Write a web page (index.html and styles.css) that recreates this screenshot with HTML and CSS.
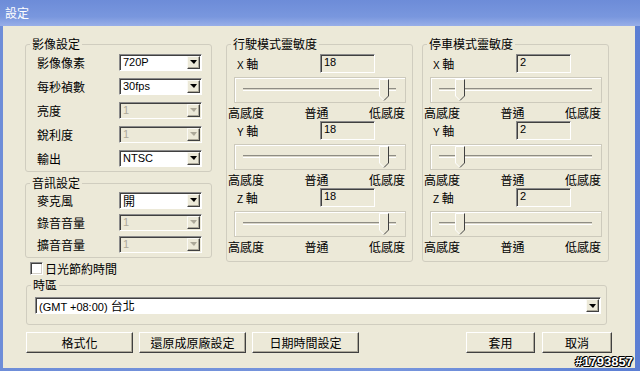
FILE: index.html
```html
<!DOCTYPE html>
<html lang="zh-Hant">
<head>
  <meta charset="UTF-8">
  <title>設定</title>
  <link rel="stylesheet" href="styles.css">
</head>
<body>

  <div class="window">
    <div class="titlebar">設定</div>

    <div class="client">
      <div class="top">

        <!-- 左欄 -->
        <div class="col-left">
          <fieldset class="group g-video">
            <legend>影像設定</legend>
            <div class="row"><span class="lbl">影像像素</span><div class="combo"><span class="val">720P</span><span class="drop"></span></div></div>
            <div class="row"><span class="lbl">每秒禎數</span><div class="combo"><span class="val">30fps</span><span class="drop"></span></div></div>
            <div class="row"><span class="lbl">亮度</span><div class="combo disabled"><span class="val">1</span><span class="drop"></span></div></div>
            <div class="row"><span class="lbl">銳利度</span><div class="combo disabled"><span class="val">1</span><span class="drop"></span></div></div>
            <div class="row"><span class="lbl">輸出</span><div class="combo"><span class="val">NTSC</span><span class="drop"></span></div></div>
          </fieldset>

          <fieldset class="group g-audio">
            <legend>音訊設定</legend>
            <div class="row"><span class="lbl">麥克風</span><div class="combo"><span class="val cjk">開</span><span class="drop"></span></div></div>
            <div class="row"><span class="lbl">錄音音量</span><div class="combo disabled"><span class="val">1</span><span class="drop"></span></div></div>
            <div class="row"><span class="lbl">擴音音量</span><div class="combo disabled"><span class="val">1</span><span class="drop"></span></div></div>
          </fieldset>

          <label class="check"><span class="box"></span>日光節約時間</label>
        </div>

        <!-- 行駛模式 -->
        <fieldset class="group sens">
          <legend>行駛模式靈敏度</legend>
          <div class="block">
            <div class="axis-row"><span class="lbl"><span class="latin">X</span> 軸</span><div class="num">18</div></div>
            <div class="slider"><div class="track"></div><svg class="thumb" style="left:144px" width="10" height="22" viewBox="0 0 10 22"><polygon points="0.5,0.5 9.5,0.5 9.5,17 5,21.5 0.5,17" fill="#ece9d8"/><polyline points="5,21.5 0.5,17 0.5,0.5 9.5,0.5" fill="none" stroke="#fff"/><polyline points="9.5,0.5 9.5,17 5,21.5" fill="none" stroke="#404040"/></svg></div>
            <div class="scale"><span>高感度</span><span>普通</span><span>低感度</span></div>
          </div>
          <div class="block">
            <div class="axis-row"><span class="lbl"><span class="latin">Y</span> 軸</span><div class="num">18</div></div>
            <div class="slider"><div class="track"></div><svg class="thumb" style="left:144px" width="10" height="22" viewBox="0 0 10 22"><polygon points="0.5,0.5 9.5,0.5 9.5,17 5,21.5 0.5,17" fill="#ece9d8"/><polyline points="5,21.5 0.5,17 0.5,0.5 9.5,0.5" fill="none" stroke="#fff"/><polyline points="9.5,0.5 9.5,17 5,21.5" fill="none" stroke="#404040"/></svg></div>
            <div class="scale"><span>高感度</span><span>普通</span><span>低感度</span></div>
          </div>
          <div class="block">
            <div class="axis-row"><span class="lbl"><span class="latin">Z</span> 軸</span><div class="num">18</div></div>
            <div class="slider"><div class="track"></div><svg class="thumb" style="left:144px" width="10" height="22" viewBox="0 0 10 22"><polygon points="0.5,0.5 9.5,0.5 9.5,17 5,21.5 0.5,17" fill="#ece9d8"/><polyline points="5,21.5 0.5,17 0.5,0.5 9.5,0.5" fill="none" stroke="#fff"/><polyline points="9.5,0.5 9.5,17 5,21.5" fill="none" stroke="#404040"/></svg></div>
            <div class="scale"><span>高感度</span><span>普通</span><span>低感度</span></div>
          </div>
        </fieldset>

        <!-- 停車模式 -->
        <fieldset class="group sens park">
          <legend>停車模式靈敏度</legend>
          <div class="block">
            <div class="axis-row"><span class="lbl"><span class="latin">X</span> 軸</span><div class="num">2</div></div>
            <div class="slider"><div class="track"></div><svg class="thumb" style="left:24px" width="10" height="22" viewBox="0 0 10 22"><polygon points="0.5,0.5 9.5,0.5 9.5,17 5,21.5 0.5,17" fill="#ece9d8"/><polyline points="5,21.5 0.5,17 0.5,0.5 9.5,0.5" fill="none" stroke="#fff"/><polyline points="9.5,0.5 9.5,17 5,21.5" fill="none" stroke="#404040"/></svg></div>
            <div class="scale"><span>高感度</span><span>普通</span><span>低感度</span></div>
          </div>
          <div class="block">
            <div class="axis-row"><span class="lbl"><span class="latin">Y</span> 軸</span><div class="num">2</div></div>
            <div class="slider"><div class="track"></div><svg class="thumb" style="left:24px" width="10" height="22" viewBox="0 0 10 22"><polygon points="0.5,0.5 9.5,0.5 9.5,17 5,21.5 0.5,17" fill="#ece9d8"/><polyline points="5,21.5 0.5,17 0.5,0.5 9.5,0.5" fill="none" stroke="#fff"/><polyline points="9.5,0.5 9.5,17 5,21.5" fill="none" stroke="#404040"/></svg></div>
            <div class="scale"><span>高感度</span><span>普通</span><span>低感度</span></div>
          </div>
          <div class="block">
            <div class="axis-row"><span class="lbl"><span class="latin">Z</span> 軸</span><div class="num">2</div></div>
            <div class="slider"><div class="track"></div><svg class="thumb" style="left:24px" width="10" height="22" viewBox="0 0 10 22"><polygon points="0.5,0.5 9.5,0.5 9.5,17 5,21.5 0.5,17" fill="#ece9d8"/><polyline points="5,21.5 0.5,17 0.5,0.5 9.5,0.5" fill="none" stroke="#fff"/><polyline points="9.5,0.5 9.5,17 5,21.5" fill="none" stroke="#404040"/></svg></div>
            <div class="scale"><span>高感度</span><span>普通</span><span>低感度</span></div>
          </div>
        </fieldset>
      </div>

      <!-- 時區 -->
      <fieldset class="group g-tz">
        <legend>時區</legend>
        <div class="combo tz"><span class="val">(GMT +08:00) <span class="cjk">台北</span></span><span class="drop"></span></div>
      </fieldset>

      <div class="buttons">
        <button class="btn wide">格式化</button>
        <button class="btn wide">還原成原廠設定</button>
        <button class="btn wide">日期時間設定</button>
        <span class="spacer"></span>
        <button class="btn apply">套用</button>
        <button class="btn cancel">取消</button>
      </div>
    </div>

    <div class="watermark">#1793857</div>
  </div>

</body>
</html>
```

FILE: styles.css
```css
* {
  box-sizing: border-box;
}

body {
  margin: 0;
  font-family: "Noto Sans CJK TC", sans-serif;
  font-size: 12px;
  color: #000;
}

.window {
  position: relative;
  width: 640px;
  height: 371px;
  display: flex;
  flex-direction: column;
  background: linear-gradient(90deg, #6e8dd8, #7896dd 60%, #5b7ed3);
  overflow: hidden;
}

.titlebar {
  height: 26px;
  padding: 6px 0 0 5px;
  color: #fff;
  font-size: 12px;
  line-height: 14px;
  background: linear-gradient(#6d8cd8, #7997de 65%, #98aee8);
}

.client {
  flex: 1;
  margin: 0 5px 3px 3px;
  padding: 12px 23px 0 22px;
  background-color: #ece9d8;
}

.top {
  display: flex;
  align-items: flex-start;
}

/* group boxes */
fieldset.group {
  margin: 0;
  padding: 0;
  min-width: 0;
  border: 1px solid #d0cdbf;
  border-radius: 3px;
}

legend {
  margin-left: 4px;
  padding: 0 2px;
  line-height: 12px;
}

.col-left {
  width: 187px;
  margin-right: 14px;
}

.row {
  display: flex;
  align-items: center;
  height: 24px;
  padding-left: 11px;
}

.row .lbl {
  width: 82px;
}

.g-video {
  padding-bottom: 1px !important;
}

.g-audio {
  margin-top: 5px !important;
  padding-bottom: 2px !important;
}

.g-audio .row {
  height: 22px;
}

/* combo boxes */
.combo {
  display: flex;
  width: 83px;
  height: 17px;
  padding: 1px 1px 1px 2px;
  background-color: #fff;
  border: 1px solid;
  border-color: #8a8a8a #fff #fff #8a8a8a;
  box-shadow: inset 1px 1px #404040;
  font-family: "Liberation Sans", sans-serif;
  font-size: 11px;
  line-height: 13px;
}

.combo .val {
  flex: 1;
  padding-left: 1px;
  white-space: nowrap;
}

.cjk {
  font-family: "Noto Sans CJK TC", sans-serif;
  font-size: 12px;
}

.drop {
  width: 13px;
  height: 13px;
  display: flex;
  align-items: center;
  justify-content: center;
  background-color: #ece9d8;
  border: 1px solid;
  border-color: #fbfaf5 #404040 #404040 #fbfaf5;
  box-shadow: inset -1px -1px #aca899;
}

.drop::after {
  content: "";
  border-left: 4px solid transparent;
  border-right: 3px solid transparent;
  border-top: 4px solid #000;
}

.combo.disabled {
  background-color: #ece9d8;
  color: #aca899;
}

.combo.disabled .drop::after {
  border-top-color: #aca899;
}

/* checkbox */
.check {
  display: flex;
  align-items: center;
  height: 13px;
  margin-top: 4px;
  padding-left: 5px;
  line-height: 13px;
}

.check .box {
  width: 13px;
  height: 13px;
  margin-right: 2px;
  background-color: #fff;
  border: 1px solid;
  border-color: #8a8a8a #fff #fff #8a8a8a;
  box-shadow: inset 1px 1px #404040, inset -1px -1px #d4d0c8;
}

/* sensitivity groups */
.sens {
  width: 187px;
  margin-right: 9px !important;
  padding: 4px 0 7px !important;
}

.park {
  margin-right: 0 !important;
}

.block + .block {
  margin-top: 1px;
}

.axis-row {
  display: flex;
  align-items: center;
  height: 19px;
  padding-left: 10px;
}

.axis-row .lbl {
  width: 83px;
}

.latin {
  font-family: "Liberation Sans", sans-serif;
  font-size: 10px;
}

.num {
  width: 55px;
  height: 19px;
  padding: 1px 3px;
  border: 1px solid;
  border-color: #8a8a8a #fff #fff #8a8a8a;
  box-shadow: inset 1px 1px #404040;
  font-family: "Liberation Sans", sans-serif;
  font-size: 11px;
  line-height: 13px;
}

.slider {
  position: relative;
  height: 26px;
  margin: 4px 6px 0 7px;
  border: 1px solid #cdcabc;
  box-shadow: inset 1px 1px #fff;
}

.track {
  position: absolute;
  left: 8px;
  right: 9px;
  top: 10px;
  height: 3px;
  background-color: #d8d5c8;
  border-top: 1px solid #8f8d84;
  border-bottom: 1px solid #fff;
}

.thumb {
  position: absolute;
  top: 1px;
}

.scale {
  display: flex;
  justify-content: space-between;
  height: 14px;
  margin: 3px 7px 0 1px;
  line-height: 14px;
}

/* time zone */
.g-tz {
  width: 581px;
  margin: 4px 0 0 1px !important;
  padding: 6px 0 10px !important;
}

.combo.tz {
  width: 566px;
  margin-left: 8px;
}

/* buttons */
.buttons {
  display: flex;
  margin-top: 7px;
  padding-left: 1px;
}

.btn {
  height: 21px;
  padding: 0;
  font-family: "Noto Sans CJK TC", sans-serif;
  font-size: 12px;
  line-height: 17px;
  color: #000;
  background-color: #ece9d8;
  border: 1px solid;
  border-color: #fff #404040 #404040 #fff;
  box-shadow: inset -1px -1px #aca899;
}

.btn.wide {
  width: 107px;
  margin-right: 6px;
}

.spacer {
  flex: 1;
}

.btn.apply {
  width: 69px;
  margin-right: 7px;
}

.btn.cancel {
  width: 70px;
}

.watermark {
  position: absolute;
  right: 7px;
  bottom: 2px;
  color: #fff;
  font-family: "Liberation Sans", sans-serif;
  font-weight: bold;
  font-size: 13px;
  line-height: 14px;
  text-shadow: 1px 0 #000, -1px 0 #000, 0 1px #000, 0 -1px #000, 1px 1px #000, -1px -1px #000;
}
```
